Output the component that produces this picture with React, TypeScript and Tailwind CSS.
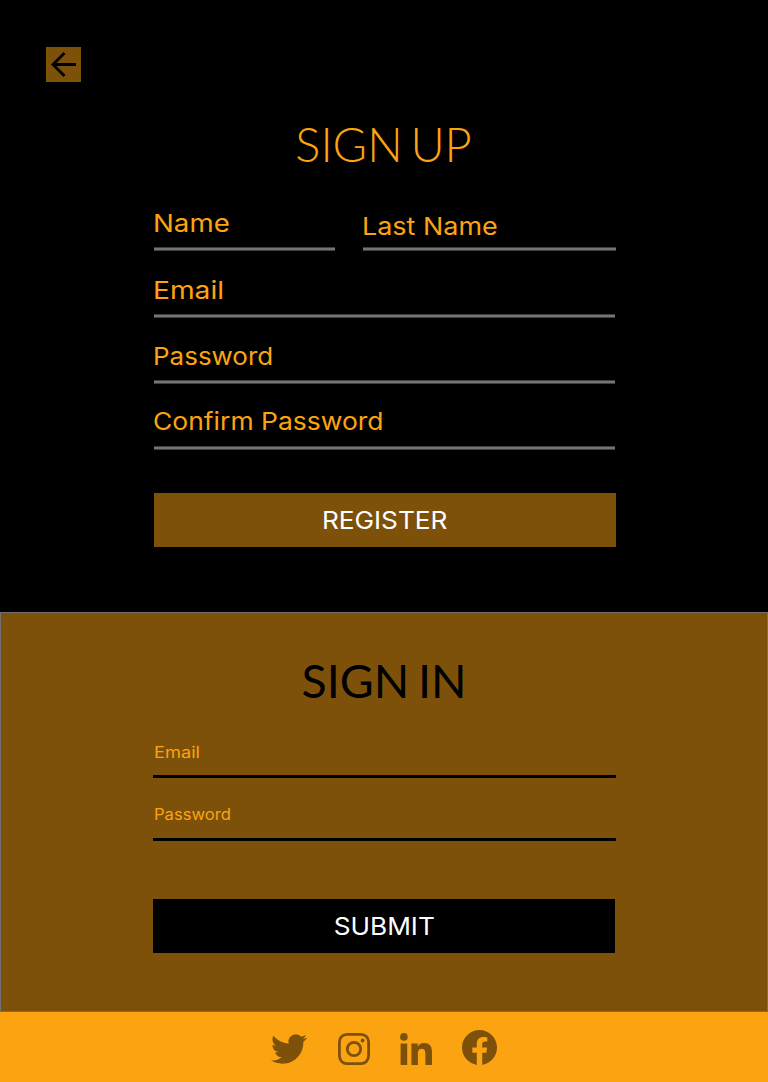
import React from "react";

const fieldText = "-ml-px block origin-left whitespace-nowrap font-['Inter',sans-serif] text-[24.5px] leading-[30px] text-[#fca311]";
const smallText = "block origin-left whitespace-nowrap pt-px font-['Inter',sans-serif] text-[15.6px] leading-[20px] text-[#fca311]";
const buttonText = "whitespace-nowrap font-['Inter',sans-serif] text-[24.5px] leading-[30px] text-white scale-x-[1.07]";
const greyLine = "h-[4px] border-y border-[#404040] bg-[#747474]";

type FieldProps = { label: string; box: string; text: string; stretch: string; line: string };

function Field({ label, box, text, stretch, line }: FieldProps) {
  return (
    <label className={`flex flex-col justify-between ${box}`}>
      <span className={`${text} ${stretch}`}>{label}</span>
      <span className={`block shrink-0 ${line}`} />
    </label>
  );
}

function Footer() {
  return (
    <footer className="flex h-[70px] bg-[#fca311] pl-[271px] pt-[17px] text-[#7d510a]">
      <svg className="mt-[2px] h-[36px] w-[36px]" viewBox="0 0 24 24" fill="currentColor" aria-label="Twitter">
        <path d="M23.953 4.57a10 10 0 01-2.825.775 4.958 4.958 0 002.163-2.723c-.951.555-2.005.959-3.127 1.184a4.92 4.92 0 00-8.384 4.482C7.69 8.095 4.067 6.13 1.64 3.162a4.822 4.822 0 00-.666 2.475c0 1.71.87 3.213 2.188 4.096a4.904 4.904 0 01-2.228-.616v.06a4.923 4.923 0 003.946 4.827 4.996 4.996 0 01-2.212.085 4.936 4.936 0 004.604 3.417 9.867 9.867 0 01-6.102 2.105c-.39 0-.779-.023-1.17-.067a13.995 13.995 0 007.557 2.209c9.053 0 13.998-7.496 13.998-13.985 0-.21 0-.42-.015-.63A9.935 9.935 0 0024 4.59z" />
      </svg>
      <svg className="ml-[31px] mt-[4px] h-[32px] w-[32px]" viewBox="0 0 32 32" fill="none" stroke="currentColor" aria-label="Instagram">
        <rect x="1.4" y="1.4" width="29.2" height="29.2" rx="7.5" strokeWidth="2.8" />
        <circle cx="16" cy="16" r="6.7" strokeWidth="2.8" />
        <circle cx="24.6" cy="7.5" r="1.9" fill="currentColor" stroke="none" />
      </svg>
      <svg className="ml-[30px] mt-[4px] h-[32px] w-[32px]" viewBox="0 0 32 32" fill="currentColor" aria-label="LinkedIn">
        <circle cx="3.9" cy="3.9" r="3.8" />
        <path d="M.6 10.6H7.2V32H.6ZM11.4 10.6H17.8V13.5H17.9C18.8 11.8 21 10.1 24.2 10.1C30.8 10.1 32 14.4 32 20.2V32H25.4V21.6C25.4 19.1 25.3 15.8 21.8 15.8C18.2 15.8 17.9 18.6 17.9 21.4V32H11.4Z" />
      </svg>
      <svg className="ml-[30px] mt-[1px] h-[35px] w-[35px]" viewBox="0 0 24 24" fill="currentColor" aria-label="Facebook">
        <path d="M24 12.073c0-6.627-5.373-12-12-12s-12 5.373-12 12c0 5.99 4.388 10.954 10.125 11.854v-8.385H7.078v-3.47h3.047V9.43c0-3.007 1.792-4.669 4.533-4.669 1.312 0 2.686.235 2.686.235v2.953H15.83c-1.491 0-1.956.925-1.956 1.874v2.25h3.328l-.532 3.47h-2.796v8.385C19.612 23.027 24 18.062 24 12.073z" />
      </svg>
    </footer>
  );
}

export default function App() {
  return (
    <main className="flex h-[1082px] w-[768px] flex-col overflow-hidden bg-black">
      <section className="h-[612px] pt-[47px]">
        <button className="ml-[46px] flex h-[35px] w-[35px] items-center justify-center bg-[#7d510a]" aria-label="Back">
          <svg className="h-[35px] w-[35px]" viewBox="0 0 35 35" fill="none" stroke="#000" strokeWidth="2.9">
            <path d="M30 17.5H7M18.5 6 7 17.5 18.5 29" />
          </svg>
        </button>
        <h1 className="mt-[34px] h-[56px] pr-px text-center font-['Lato',sans-serif] text-[47px] font-light leading-[56px] text-[#fca311] [word-spacing:-5px]">SIGN UP</h1>
        <form className="ml-[154px] mt-[36px] w-[462px]">
          <div className="flex gap-[28px]">
            <Field label="Name" box="h-[43px] w-[181px]" text={fieldText} stretch="scale-x-[1.13]" line={greyLine} />
            <Field label="Last Name" box="h-[43px] w-[253px] pt-[3px]" text={fieldText} stretch="scale-x-[1.1]" line={greyLine} />
          </div>
          <Field label="Email" box="mt-[24px] h-[43px] w-[461px]" text={fieldText} stretch="scale-x-[1.15]" line={greyLine} />
          <Field label="Password" box="mt-[23px] h-[43px] w-[461px]" text={fieldText} stretch="scale-x-[1.06]" line={greyLine} />
          <Field label="Confirm Password" box="mt-[22px] h-[44px] w-[461px]" text={fieldText} stretch="scale-x-[1.08]" line={greyLine} />
          <button type="button" className="mt-[43px] flex h-[54px] w-full items-center justify-center bg-[#7d510a]">
            <span className={buttonText}>REGISTER</span>
          </button>
        </form>
      </section>
      <section className="h-[400px] border border-[#707070] bg-[#7d510a] pt-[39px]">
        <h2 className="h-[56px] text-center font-['Lato',sans-serif] text-[46.5px] leading-[56px] text-black [word-spacing:-3px]">SIGN IN</h2>
        <form className="ml-[152px] mt-[34px] w-[463px]">
          <Field label="Email" box="h-[36px] pl-px" text={smallText} stretch="scale-x-[1.17]" line="-ml-px h-[3px] bg-black" />
          <Field label="Password" box="mt-[26px] h-[37px] pl-px" text={smallText} stretch="scale-x-[1.065]" line="-ml-px h-[3px] bg-black" />
          <button type="button" className="mt-[58px] flex h-[54px] w-[462px] items-center justify-center bg-black">
            <span className={buttonText}>SUBMIT</span>
          </button>
        </form>
      </section>
      <Footer />
    </main>
  );
}
